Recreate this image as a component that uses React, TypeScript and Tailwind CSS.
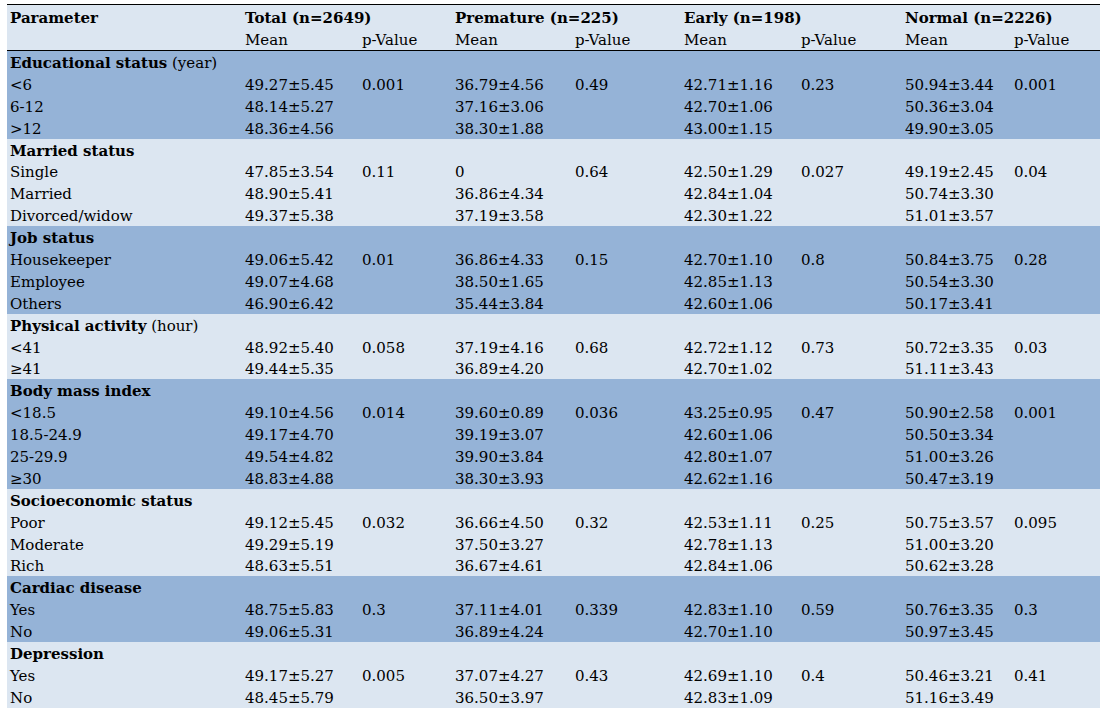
const COLS =
  "grid grid-cols-[235px_117px_93px_120px_109px_117px_104px_109px_89px]";

type Row = { label: string; cells: string[] };
type Group = { title: string; unit?: string; rows: Row[] };

const GROUPS: Group[] = [
  {
    title: "Educational status",
    unit: "(year)",
    rows: [
      { label: "<6", cells: ["49.27±5.45", "0.001", "36.79±4.56", "0.49", "42.71±1.16", "0.23", "50.94±3.44", "0.001"] },
      { label: "6-12", cells: ["48.14±5.27", "", "37.16±3.06", "", "42.70±1.06", "", "50.36±3.04", ""] },
      { label: ">12", cells: ["48.36±4.56", "", "38.30±1.88", "", "43.00±1.15", "", "49.90±3.05", ""] },
    ],
  },
  {
    title: "Married status",
    rows: [
      { label: "Single", cells: ["47.85±3.54", "0.11", "0", "0.64", "42.50±1.29", "0.027", "49.19±2.45", "0.04"] },
      { label: "Married", cells: ["48.90±5.41", "", "36.86±4.34", "", "42.84±1.04", "", "50.74±3.30", ""] },
      { label: "Divorced/widow", cells: ["49.37±5.38", "", "37.19±3.58", "", "42.30±1.22", "", "51.01±3.57", ""] },
    ],
  },
  {
    title: "Job status",
    rows: [
      { label: "Housekeeper", cells: ["49.06±5.42", "0.01", "36.86±4.33", "0.15", "42.70±1.10", "0.8", "50.84±3.75", "0.28"] },
      { label: "Employee", cells: ["49.07±4.68", "", "38.50±1.65", "", "42.85±1.13", "", "50.54±3.30", ""] },
      { label: "Others", cells: ["46.90±6.42", "", "35.44±3.84", "", "42.60±1.06", "", "50.17±3.41", ""] },
    ],
  },
  {
    title: "Physical activity",
    unit: "(hour)",
    rows: [
      { label: "<41", cells: ["48.92±5.40", "0.058", "37.19±4.16", "0.68", "42.72±1.12", "0.73", "50.72±3.35", "0.03"] },
      { label: "≥41", cells: ["49.44±5.35", "", "36.89±4.20", "", "42.70±1.02", "", "51.11±3.43", ""] },
    ],
  },
  {
    title: "Body mass index",
    rows: [
      { label: "<18.5", cells: ["49.10±4.56", "0.014", "39.60±0.89", "0.036", "43.25±0.95", "0.47", "50.90±2.58", "0.001"] },
      { label: "18.5-24.9", cells: ["49.17±4.70", "", "39.19±3.07", "", "42.60±1.06", "", "50.50±3.34", ""] },
      { label: "25-29.9", cells: ["49.54±4.82", "", "39.90±3.84", "", "42.80±1.07", "", "51.00±3.26", ""] },
      { label: "≥30", cells: ["48.83±4.88", "", "38.30±3.93", "", "42.62±1.16", "", "50.47±3.19", ""] },
    ],
  },
  {
    title: "Socioeconomic status",
    rows: [
      { label: "Poor", cells: ["49.12±5.45", "0.032", "36.66±4.50", "0.32", "42.53±1.11", "0.25", "50.75±3.57", "0.095"] },
      { label: "Moderate", cells: ["49.29±5.19", "", "37.50±3.27", "", "42.78±1.13", "", "51.00±3.20", ""] },
      { label: "Rich", cells: ["48.63±5.51", "", "36.67±4.61", "", "42.84±1.06", "", "50.62±3.28", ""] },
    ],
  },
  {
    title: "Cardiac disease",
    rows: [
      { label: "Yes", cells: ["48.75±5.83", "0.3", "37.11±4.01", "0.339", "42.83±1.10", "0.59", "50.76±3.35", "0.3"] },
      { label: "No", cells: ["49.06±5.31", "", "36.89±4.24", "", "42.70±1.10", "", "50.97±3.45", ""] },
    ],
  },
  {
    title: "Depression",
    rows: [
      { label: "Yes", cells: ["49.17±5.27", "0.005", "37.07±4.27", "0.43", "42.69±1.10", "0.4", "50.46±3.21", "0.41"] },
      { label: "No", cells: ["48.45±5.79", "", "36.50±3.97", "", "42.83±1.09", "", "51.16±3.49", ""] },
    ],
  },
];

const HEADS = ["Total (n=2649)", "Premature (n=225)", "Early (n=198)", "Normal (n=2226)"];

export default function App() {
  return (
    <div className="min-h-screen bg-white pt-[4px] pl-[7px] font-['DejaVu_Serif',serif] text-[15px] leading-[22px] text-black">
      <div className="w-[1093px]">
        <div className="border-t border-b border-black bg-[#dce6f1]">
          <div className={`${COLS} h-[23px] pt-[2px]`}>
            <div className="px-[3px] font-bold">Parameter</div>
            {HEADS.map((h) => (
              <div key={h} className="col-span-2 px-[3px] font-bold">
                {h}
              </div>
            ))}
          </div>
          <div className={`${COLS} h-[22px] pt-[1px]`}>
            <div />
            {HEADS.map((h) => (
              <div key={h} className="contents">
                <div className="px-[3px]">Mean</div>
                <div className="px-[3px]">p-Value</div>
              </div>
            ))}
          </div>
        </div>
        {GROUPS.map((g, gi) => (
          <div key={g.title} className={gi % 2 === 0 ? "bg-[#95b3d7]" : "bg-[#dce6f1]"}>
            <div className="h-[21.9px] pt-[2px] px-[3px] leading-[21.9px]">
              <span className="font-bold">{g.title}</span>
              {g.unit && <span> {g.unit}</span>}
            </div>
            {g.rows.map((r) => (
              <div key={r.label} className={`${COLS} h-[21.9px] pt-[2px] leading-[21.9px]`}>
                <div className="px-[3px]">{r.label}</div>
                {r.cells.map((c, i) => (
                  <div key={i} className="px-[3px]">
                    {c}
                  </div>
                ))}
              </div>
            ))}
          </div>
        ))}
      </div>
    </div>
  );
}
